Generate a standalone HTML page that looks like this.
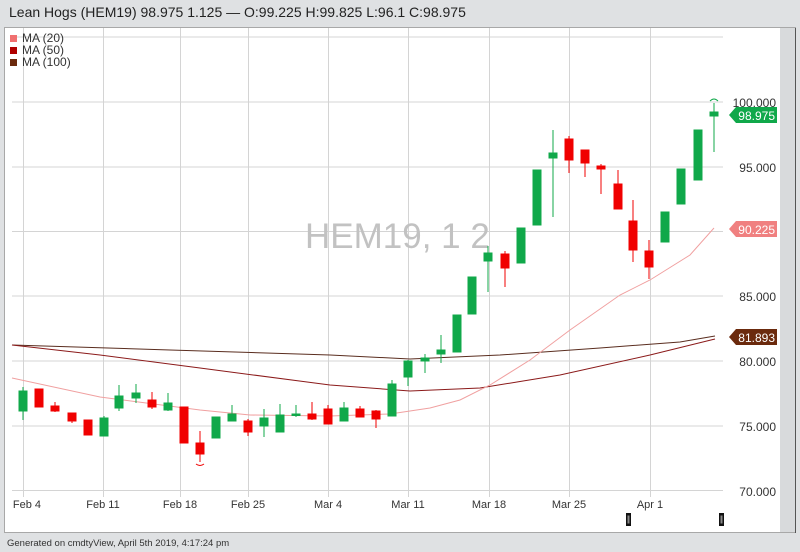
<!DOCTYPE html>
<html><head><meta charset="utf-8"><style>
html,body{margin:0;padding:0;width:800px;height:552px;overflow:hidden;background:#dfe1e3;font-family:"Liberation Sans",sans-serif}
</style></head><body>
<svg width="800" height="552" xmlns="http://www.w3.org/2000/svg" font-family="Liberation Sans, sans-serif">
<rect x="0" y="0" width="800" height="552" fill="#dfe1e3"/>
<text x="9" y="17" font-size="14" fill="#222">Lean Hogs (HEM19) 98.975 1.125 — O:99.225 H:99.825 L:96.1 C:98.975</text>
<rect x="4.5" y="27.5" width="791" height="505" fill="#fff" stroke="#a8a8a8"/>
<rect x="780" y="28" width="15" height="504" fill="#d8dadc"/>
<line x1="795.5" y1="28" x2="795.5" y2="533" stroke="#555"/>
<g stroke="#d4d4d4" stroke-width="1">
<line x1="12" y1="37" x2="723" y2="37"/><line x1="12" y1="102" x2="723" y2="102"/><line x1="12" y1="167" x2="723" y2="167"/><line x1="12" y1="231.5" x2="723" y2="231.5"/><line x1="12" y1="296" x2="723" y2="296"/><line x1="12" y1="361" x2="723" y2="361"/><line x1="12" y1="426" x2="723" y2="426"/><line x1="12" y1="490.5" x2="723" y2="490.5"/>
<line x1="23.5" y1="28" x2="23.5" y2="497"/><line x1="103.5" y1="28" x2="103.5" y2="497"/><line x1="180.5" y1="28" x2="180.5" y2="497"/><line x1="248.5" y1="28" x2="248.5" y2="497"/><line x1="328.5" y1="28" x2="328.5" y2="497"/><line x1="408.5" y1="28" x2="408.5" y2="497"/><line x1="489.5" y1="28" x2="489.5" y2="497"/><line x1="569.5" y1="28" x2="569.5" y2="497"/><line x1="650.5" y1="28" x2="650.5" y2="497"/>
</g>
<text x="305" y="248" font-size="35" fill="#c2c2c2">HEM19, 1 2</text>
<rect x="10" y="35" width="7" height="7" fill="#f07070"/><rect x="10" y="47" width="7" height="7" fill="#b00000"/><rect x="10" y="59" width="7" height="7" fill="#6b2a0d"/>
<g font-size="12" fill="#333"><text x="22" y="42">MA (20)</text><text x="22" y="54">MA (50)</text><text x="22" y="66">MA (100)</text></g>
<g fill="none" stroke-width="1">
<polyline stroke="#5a2d1f" points="12,345 170,350 330,355 410,359 500,355 600,348 680,342 715,336"/>
<polyline stroke="#8b1a1a" points="12,345 100,355 200,368 330,385 410,391 480,388 560,375 650,355 715,339"/>
<polyline stroke="#f0a0a0" points="12,378 100,397 200,410 250,415 330,416 390,414 430,408 460,400 490,385 530,360 570,330 620,295 650,280 690,255 714,228"/>
</g>
<g stroke-width="1">
<g fill="#10a84a" stroke="#10a84a">
<line x1="23" y1="387" x2="23" y2="420"/><rect x="19" y="391" width="8" height="20"/>
<line x1="104" y1="416" x2="104" y2="436"/><rect x="100" y="418" width="8" height="18"/>
<line x1="119" y1="385" x2="119" y2="411"/><rect x="115" y="396" width="8" height="12"/>
<line x1="136" y1="384" x2="136" y2="403"/><rect x="132" y="393" width="8" height="5"/>
<line x1="168" y1="393" x2="168" y2="411"/><rect x="164" y="403" width="8" height="7"/>
<rect x="212" y="417" width="8" height="21"/>
<line x1="232" y1="405" x2="232" y2="421"/><rect x="228" y="414" width="8" height="7"/>
<line x1="264" y1="409" x2="264" y2="437"/><rect x="260" y="418" width="8" height="8"/>
<line x1="280" y1="404" x2="280" y2="432"/><rect x="276" y="415" width="8" height="17"/>
<line x1="296" y1="405" x2="296" y2="417"/><rect x="292" y="414" width="8" height="1.5"/>
<line x1="344" y1="402" x2="344" y2="421"/><rect x="340" y="408" width="8" height="13"/>
<line x1="392" y1="380" x2="392" y2="416"/><rect x="388" y="384" width="8" height="32"/>
<line x1="408" y1="360" x2="408" y2="386"/><rect x="404" y="361" width="8" height="16"/>
<line x1="425" y1="354" x2="425" y2="373"/><rect x="421" y="358" width="8" height="3"/>
<line x1="441" y1="335" x2="441" y2="363"/><rect x="437" y="350" width="8" height="4"/>
<rect x="453" y="315" width="8" height="37"/>
<rect x="468" y="277" width="8" height="37"/>
<line x1="488" y1="246" x2="488" y2="292"/><rect x="484" y="253" width="8" height="8"/>
<rect x="517" y="228" width="8" height="35"/>
<rect x="533" y="170" width="8" height="55"/>
<line x1="553" y1="130" x2="553" y2="217"/><rect x="549" y="153" width="8" height="5"/>
<rect x="661" y="212" width="8" height="30"/>
<rect x="677" y="169" width="8" height="35"/>
<rect x="694" y="130" width="8" height="50"/>
<line x1="714" y1="103" x2="714" y2="152"/><rect x="710" y="112" width="8" height="4"/>
</g>
<g fill="#f00000" stroke="#f00000">
<rect x="35" y="389" width="8" height="18"/>
<line x1="55" y1="402" x2="55" y2="412"/><rect x="51" y="406" width="8" height="5"/>
<line x1="72" y1="413" x2="72" y2="423"/><rect x="68" y="413" width="8" height="8"/>
<rect x="84" y="420" width="8" height="15"/>
<line x1="152" y1="392" x2="152" y2="409"/><rect x="148" y="400" width="8" height="7"/>
<rect x="180" y="407" width="8" height="36"/>
<line x1="200" y1="431" x2="200" y2="462"/><rect x="196" y="443" width="8" height="11"/>
<line x1="248" y1="419" x2="248" y2="436"/><rect x="244" y="421" width="8" height="11"/>
<line x1="312" y1="402" x2="312" y2="420"/><rect x="308" y="414" width="8" height="5"/>
<line x1="328" y1="405" x2="328" y2="424"/><rect x="324" y="409" width="8" height="15"/>
<line x1="360" y1="406" x2="360" y2="417"/><rect x="356" y="409" width="8" height="8"/>
<line x1="376" y1="410" x2="376" y2="428"/><rect x="372" y="411" width="8" height="8"/>
<line x1="505" y1="251" x2="505" y2="287"/><rect x="501" y="254" width="8" height="14"/>
<line x1="569" y1="136" x2="569" y2="173"/><rect x="565" y="139" width="8" height="21"/>
<line x1="585" y1="150" x2="585" y2="177"/><rect x="581" y="150" width="8" height="13"/>
<line x1="601" y1="164" x2="601" y2="194"/><rect x="597" y="166" width="8" height="3"/>
<line x1="618" y1="170" x2="618" y2="209"/><rect x="614" y="184" width="8" height="25"/>
<line x1="633" y1="200" x2="633" y2="262"/><rect x="629" y="221" width="8" height="29"/>
<line x1="649" y1="240" x2="649" y2="279"/><rect x="645" y="251" width="8" height="16"/>
</g>
</g>
<path d="M196,464 q4,3 8,0" stroke="#f00000" fill="none"/>
<path d="M710,101 q4,-4 8,0" stroke="#10a84a" fill="none"/>
<g font-size="12" fill="#333" text-anchor="end">
<text x="776" y="107">100.000</text><text x="776" y="172">95.000</text><text x="776" y="301">85.000</text><text x="776" y="366">80.000</text><text x="776" y="431">75.000</text><text x="776" y="496">70.000</text>
</g>
<path d="M729,115 L736,107 L777,107 L777,123 L736,123 Z" fill="#10a84a"/>
<path d="M729,229 L736,221 L777,221 L777,237 L736,237 Z" fill="#f08080"/>
<path d="M729,337 L736,329 L777,329 L777,345 L736,345 Z" fill="#6b2a0d"/>
<g font-size="12" fill="#fff" text-anchor="end"><text x="775" y="120">98.975</text><text x="775" y="234">90.225</text><text x="775" y="342">81.893</text></g>
<g font-size="11" fill="#333" text-anchor="middle">
<text x="27" y="508">Feb 4</text><text x="103" y="508">Feb 11</text><text x="180" y="508">Feb 18</text><text x="248" y="508">Feb 25</text><text x="328" y="508">Mar 4</text><text x="408" y="508">Mar 11</text><text x="489" y="508">Mar 18</text><text x="569" y="508">Mar 25</text><text x="650" y="508">Apr 1</text>
</g>
<rect x="626" y="513" width="5" height="13" fill="#111"/><rect x="627.5" y="515.5" width="2" height="8" fill="#888"/>
<rect x="719" y="513" width="5" height="13" fill="#111"/><rect x="720.5" y="515.5" width="2" height="8" fill="#888"/>
<text x="7" y="546" font-size="9.5" fill="#333">Generated on cmdtyView, April 5th 2019, 4:17:24 pm</text>
</svg>
</body></html>
